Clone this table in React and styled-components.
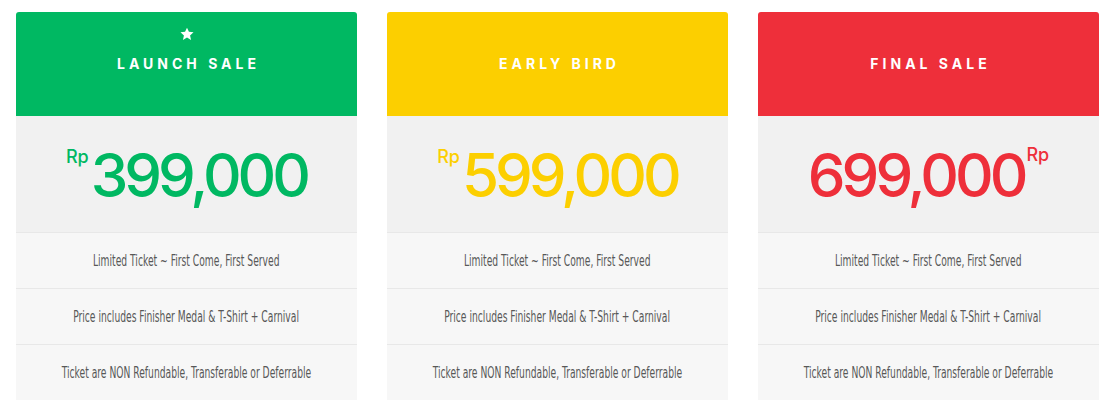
import React from "react";
import styled, { createGlobalStyle } from "styled-components";

const GlobalStyle = createGlobalStyle`
  body {
    margin: 0;
    background: #ffffff;
  }
`;

const Wrap = styled.div`
  display: grid;
  grid-template-columns: repeat(3, 341px);
  column-gap: 30px;
  padding: 12px 16px 0;
`;

const Card = styled.div`
  display: flex;
  flex-direction: column;
`;

const Header = styled.div`
  position: relative;
  height: 104px;
  background: ${(p) => p.color};
  border-radius: 3px 3px 0 0;
  display: flex;
  align-items: center;
  justify-content: center;
`;

const Star = styled.svg`
  position: absolute;
  top: 14px;
  left: 50%;
  margin-left: -8px;
`;

const Title = styled.div`
  color: #ffffff;
  font-family: Inter, "Noto Sans", sans-serif;
  font-weight: 700;
  font-size: 14px;
  letter-spacing: 4px;
  padding-left: 4px;
  margin-top: -2px;
`;

const PriceBox = styled.div`
  height: 116px;
  background: #f1f1f1;
  display: flex;
  align-items: center;
  justify-content: center;
`;

const Price = styled.div`
  display: flex;
  align-items: flex-start;
  color: ${(p) => p.color};
  font-family: Inter, "Noto Sans", sans-serif;
  font-weight: 500;
  font-size: 60px;
  letter-spacing: -4px;
  line-height: 1;
  margin-top: 2px;
`;

const Currency = styled.span`
  font-size: 18px;
  letter-spacing: 0;
  margin: ${(p) => (p.after ? "1px 0 0 2px" : "3px 2px 0 0")};
`;

const Feature = styled.div`
  height: 55px;
  background: #f7f7f7;
  border-top: 1px solid #e8e8e8;
  display: flex;
  align-items: center;
  justify-content: center;
  color: #585858;
`;

const FeatureText = styled.span`
  display: inline-block;
  white-space: nowrap;
  font-family: "DejaVu Sans Condensed", "DejaVu Sans", sans-serif;
  font-stretch: condensed;
  font-size: 15px;
  transform: scaleX(0.68);
`;

const StarIcon = () => (
  <Star width="16" height="16" viewBox="0 0 24 24">
    <path
      fill="#ffffff"
      d="M12 2.5l2.9 6.3 6.9.7-5.2 4.6 1.5 6.8L12 17.4l-6.1 3.5 1.5-6.8L2.2 9.5l6.9-.7z"
    />
  </Star>
);

const features = [
  "Limited Ticket ~ First Come, First Served",
  "Price includes Finisher Medal & T-Shirt + Carnival",
  "Ticket are NON Refundable, Transferable or Deferrable",
];

const plans = [
  { title: "LAUNCH SALE", price: "399,000", color: "#00b862", star: true, rpAfter: false },
  { title: "EARLY BIRD", price: "599,000", color: "#fccf00", rpAfter: false },
  { title: "FINAL SALE", price: "699,000", color: "#ee2f3a", rpAfter: true },
];

export default function App() {
  return (
    <>
      <GlobalStyle />
      <Wrap>
        {plans.map((p) => (
          <Card key={p.title}>
            <Header color={p.color}>
              {p.star && <StarIcon />}
              <Title>{p.title}</Title>
            </Header>
            <PriceBox>
              <Price color={p.color}>
                {!p.rpAfter && <Currency>Rp</Currency>}
                {p.price}
                {p.rpAfter && <Currency after>Rp</Currency>}
              </Price>
            </PriceBox>
            {features.map((f) => (
              <Feature key={f}>
                <FeatureText>{f}</FeatureText>
              </Feature>
            ))}
          </Card>
        ))}
      </Wrap>
    </>
  );
}
